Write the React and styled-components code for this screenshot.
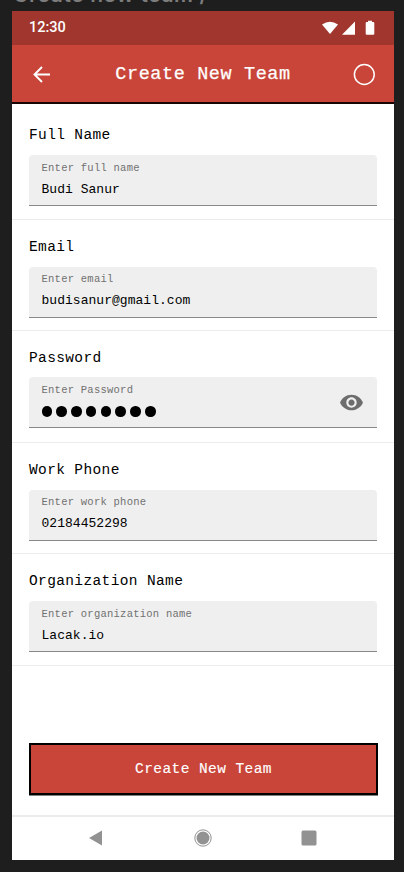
import React from 'react';
import styled, { createGlobalStyle } from 'styled-components';

const Global = createGlobalStyle`
  * { box-sizing: border-box; }
  body { margin: 0; background: #1e1e1e; font-family: "Liberation Mono", monospace; color: #000; overflow: hidden; }
  svg { display: block; }
`;

const Canvas = styled.div`
  width: 404px;
  height: 872px;
  padding: 0 10px 0 12px;
  overflow: hidden;
  background: #1e1e1e;
`;

const FrameName = styled.div`
  height: 11px;
  display: flex;
  align-items: flex-end;
  padding: 0 0 6px 1px;
  overflow: hidden;
  color: #7d7d7d;
  font: 600 21px/20px Inter, sans-serif;
  letter-spacing: 0.6px;
  white-space: nowrap;
`;

const Phone = styled.main`
  width: 382px;
  height: 849px;
  display: flex;
  flex-direction: column;
  background: #fff;
`;

const StatusBar = styled.div`
  height: 34px;
  flex: none;
  display: flex;
  align-items: center;
  justify-content: space-between;
  padding: 0 18px 0 17px;
  background: #a0362d;
  color: #fff;
  font: 500 14.5px/20px Roboto, sans-serif;
`;

const AppBar = styled.header`
  height: 59px;
  flex: none;
  display: grid;
  grid-template-columns: 24px 1fr 24px;
  align-items: center;
  padding: 0 18px;
  background: #c94539;
  border-bottom: 2px solid #1a0505;
`;

const Title = styled.h1`
  margin: 0;
  padding-top: 3px;
  text-align: center;
  color: #fff;
  font-size: 18.5px;
  font-weight: 400;
  line-height: 24px;
  letter-spacing: 0.6px;
  -webkit-text-stroke: 0.25px #fff;
`;

const Form = styled.form`
  flex: none;
  padding-top: 4px;
`;

const Section = styled.section`
  height: 111.5px;
  padding: 17px 17px 0;
  border-bottom: 1px solid #ececec;
`;

const Label = styled.div`
  height: 20px;
  margin-bottom: ${(p) => (p.$tight ? '9px' : '10px')};
  font-size: 14.5px;
  line-height: 20px;
  letter-spacing: 0.37px;
`;

const Field = styled.div`
  height: 51px;
  display: flex;
  align-items: center;
  justify-content: space-between;
  padding: 0 13px 0 12.5px;
  background: #efefef;
  border-radius: 4px 4px 0 0;
  border-bottom: 1px solid #888;
`;

const FieldText = styled.div`
  height: 39px;
`;

const Hint = styled.div`
  color: #717171;
  font-size: 10.5px;
  line-height: 14px;
  letter-spacing: 0.25px;
`;

const Value = styled.div`
  height: 18px;
  margin-top: 6px;
  font-size: 13px;
  line-height: 18px;
  letter-spacing: 0.03px;
`;

const Dots = styled.div`
  height: 18px;
  margin-top: 6px;
  display: flex;
  align-items: center;
  gap: 4.3px;
`;

const Dot = styled.i`
  width: 10.5px;
  height: 10.5px;
  border-radius: 50%;
  background: #000;
`;

const Submit = styled.button`
  width: 349px;
  height: 52px;
  flex: none;
  margin: auto 0 20px 17px;
  padding: 0;
  background: #c94539;
  border: 2px solid #000;
  box-shadow: 0 0.5px 0 #000;
  color: #fff;
  font: 400 14.5px/20px "Liberation Mono", monospace;
  letter-spacing: 0.43px;
  -webkit-text-stroke: 0.15px #fff;
`;

const NavBar = styled.nav`
  height: 45px;
  flex: none;
  border-top: 2px solid #ececec;
  display: flex;
  justify-content: space-between;
  align-items: center;
  padding: 0 77px 2px 76px;
`;

const fields = [
  ['Full Name', 'Enter full name', 'Budi Sanur'],
  ['Email', 'Enter email', 'budisanur@gmail.com'],
  ['Password', 'Enter Password', null],
  ['Work Phone', 'Enter work phone', '02184452298'],
  ['Organization Name', 'Enter organization name', 'Lacak.io'],
];

export default function App() {
  return (
    <Canvas>
      <Global />
      <FrameName>Create new team /</FrameName>
      <Phone>
        <StatusBar>
          <span>12:30</span>
          <svg width="54" height="16" viewBox="0 0 54 16" fill="#fff">
            <path d="M0 4.6Q8 -1.3 16 4.6L8 14Z" />
            <path d="M33 1.5V14.8H20Z" />
            <path d="M44.8 2H46V0.8H50V2H51.2Q52.3 2 52.3 3.1V13.7Q52.3 14.8 51.2 14.8H44.8Q43.7 14.8 43.7 13.7V3.1Q43.7 2 44.8 2Z" />
          </svg>
        </StatusBar>
        <AppBar>
          <svg width="24" height="24" viewBox="0 0 24 24" fill="none" stroke="#fff" strokeWidth="1.9">
            <path d="M20 12.5H5M12 5L4.5 12.5L12 20" />
          </svg>
          <Title>Create New Team</Title>
          <svg width="24" height="24" viewBox="0 0 24 24" fill="none" stroke="#fff" strokeWidth="1.5">
            <circle cx="12.3" cy="12.5" r="9.9" />
          </svg>
        </AppBar>
        <Form>
          {fields.map(([label, hint, value]) => (
            <Section key={label}>
              <Label $tight={!value}>{label}</Label>
              <Field>
                <FieldText>
                  <Hint>{hint}</Hint>
                  {value ? (
                    <Value>{value}</Value>
                  ) : (
                    <Dots>{Array.from({ length: 8 }, (_, i) => <Dot key={i} />)}</Dots>
                  )}
                </FieldText>
                {!value && (
                  <svg width="25" height="25" viewBox="0 0 24 24" fill="#6d6d6d">
                    <path d="M12 4.5C7 4.5 2.73 7.61 1 12c1.73 4.39 6 7.5 11 7.5s9.27-3.11 11-7.5c-1.73-4.39-6-7.5-11-7.5zM12 17c-2.76 0-5-2.24-5-5s2.24-5 5-5 5 2.24 5 5-2.24 5-5 5zm0-8c-1.66 0-3 1.34-3 3s1.34 3 3 3 3-1.34 3-3-1.34-3-3-3z" />
                  </svg>
                )}
              </Field>
            </Section>
          ))}
        </Form>
        <Submit type="button">Create New Team</Submit>
        <NavBar>
          <svg width="16" height="18" viewBox="0 0 16 18" fill="#929292">
            <path d="M1 9L14 1.5V16.5Z" />
          </svg>
          <svg width="18" height="18" viewBox="0 0 18 18">
            <circle cx="9" cy="9" r="8.2" fill="none" stroke="#929292" />
            <circle cx="9" cy="9" r="6.5" fill="#929292" />
          </svg>
          <svg width="16" height="16" viewBox="0 0 16 16" fill="#929292">
            <rect x="0.5" y="0.5" width="15" height="15" rx="1.5" />
          </svg>
        </NavBar>
      </Phone>
    </Canvas>
  );
}
